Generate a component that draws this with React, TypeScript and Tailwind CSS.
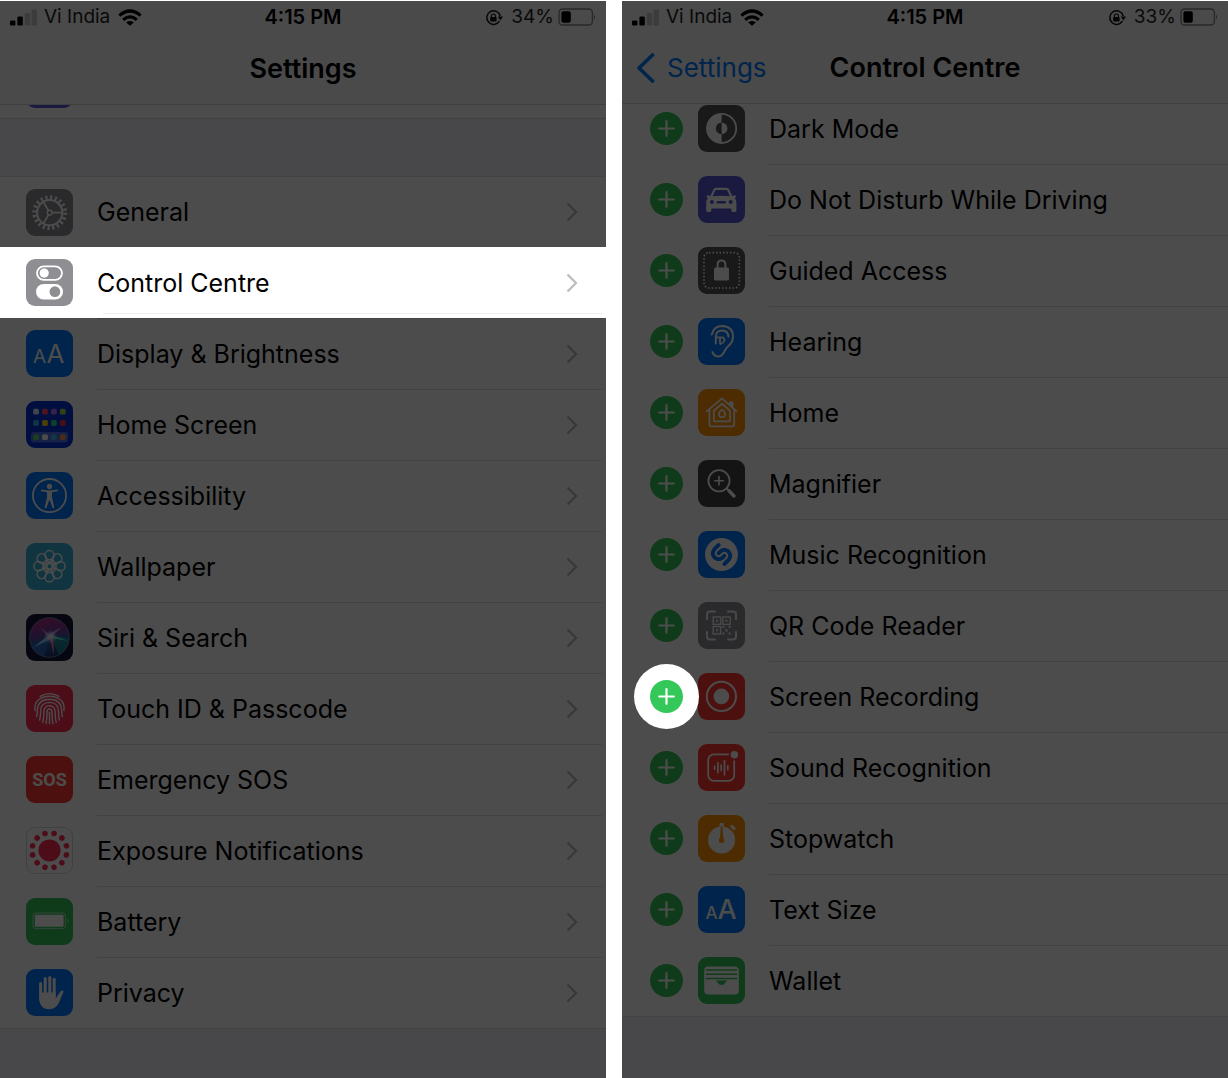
import type { ReactNode } from "react";
import { SiShazam } from "react-icons/si";

/* ---------- tile artwork, drawn on a 47 x 47 grid ---------- */

function Tile({ color, children }: { color: string; children: ReactNode }) {
  return (
    <svg viewBox="0 0 47 47" className="size-[47px] shrink-0" aria-hidden="true" fill="none">
      <rect width="47" height="47" rx="9" fill={color} />
      {children}
    </svg>
  );
}

const GeneralIcon = () => (
  <Tile color="#8e8e93">
    <circle cx="23.7" cy="23.7" r="12.6" stroke="#fff" strokeWidth="2" />
    <circle cx="23.7" cy="23.7" r="15.4" stroke="#fff" strokeWidth="4" strokeDasharray="2.1 2.738" />
    <circle cx="23.7" cy="23.7" r="2.4" stroke="#fff" strokeWidth="1.4" />
    <path d="M26.2 23.7H36M22.4 21.5L17.4 12.9M22.4 25.9L17.4 34.5" stroke="#fff" strokeWidth="1.8" />
  </Tile>
);

const ControlCentreIcon = () => (
  <Tile color="#8e8e93">
    <rect x="11" y="7.3" width="25" height="13.6" rx="6.8" stroke="#fff" strokeWidth="1.8" />
    <circle cx="18.2" cy="14.1" r="4.6" fill="#fff" />
    <rect x="10" y="25" width="27" height="15.4" rx="7.7" fill="#fff" />
    <circle cx="28.9" cy="32.7" r="5.4" fill="#8e8e93" />
  </Tile>
);

const DisplayIcon = () => (
  <Tile color="#007aff">
    <g fill="#fff" fontFamily="Inter, sans-serif" fontWeight="400">
      <text x="7" y="33" fontSize="19">A</text>
      <text x="20.6" y="33" fontSize="26">A</text>
    </g>
  </Tile>
);

const homeDots = [
  ["#d6e6ff", "#ff4562", "#b968f0", "#a9d83f"],
  ["#35aee6", "#ffcf10", "#35d38a", "#f0303a"],
  ["#58d05c", "#ffffff", "#45b4dc", "#f2984a"],
];
const HomeScreenIcon = () => (
  <Tile color="#0433d8">
    <rect x="5" y="31" width="37" height="10.4" rx="3" fill="#4f70e6" />
    {homeDots.map((line, r) =>
      line.map((c, i) => (
        <rect key={c} x={7.2 + i * 8.9} y={[7.8, 19.1, 33.2][r]} width="5.8" height="5.8" rx="1.6" fill={c} />
      )),
    )}
  </Tile>
);

const AccessibilityIcon = () => (
  <Tile color="#007aff">
    <circle cx="23.5" cy="23.6" r="16.6" stroke="#fff" strokeWidth="1.8" />
    <circle cx="23.5" cy="14.4" r="2.6" fill="#fff" />
    <path
      d="M15.4 17.4L21 18.2H26L31.6 17.4Q32.9 18.4 31.6 19.2L26 20.3V25.6L28.3 35.2Q27.6 36.7 26.5 35.8L23.8 28.2H23.2L20.5 35.8Q19.4 36.7 18.7 35.2L21 25.6V20.3L15.4 19.2Q14.1 18.4 15.4 17.4Z"
      fill="#fff"
    />
  </Tile>
);

const WallpaperIcon = () => (
  <Tile color="#38b0d6">
    <g stroke="#fff" strokeWidth="1.5">
      {[0, 45, 90, 135, 180, 225, 270, 315].map((a) => (
        <g key={a} transform={`rotate(${a} 23.5 23.2)`}>
          <circle cx="23.5" cy="12.2" r="4.6" />
          <path d="M23.5 20.2L20.4 15.6M23.5 20.2L26.6 15.6" />
        </g>
      ))}
      <circle cx="23.5" cy="23.2" r="2.8" />
    </g>
  </Tile>
);

const SiriIcon = () => (
  <Tile color="#15143a">
    <defs>
      <linearGradient id="siriOrb" x1="0.4" y1="0" x2="0.6" y2="1">
        <stop offset="0" stopColor="#b02a80" />
        <stop offset="0.4" stopColor="#6c3d9c" />
        <stop offset="0.6" stopColor="#2a5aa0" />
        <stop offset="1" stopColor="#173270" />
      </linearGradient>
      <radialGradient id="siriGlow">
        <stop offset="0" stopColor="#fff" />
        <stop offset="0.35" stopColor="#dfe8ff" stopOpacity="0.7" />
        <stop offset="1" stopColor="#9fc4ff" stopOpacity="0" />
      </radialGradient>
    </defs>
    <circle cx="23.5" cy="23.5" r="20" fill="url(#siriOrb)" />
    <path d="M24 22L5 33Q9 41 18 43Z" fill="#2f7fe0" opacity="0.5" />
    <path d="M24 22L43 24Q43 36 33 41Z" fill="#12a79a" opacity="0.6" />
    <path d="M24 20L8 33L26 24.5Z" fill="#8fd8ff" />
    <path d="M23 22L28 41L27 21Z" fill="#ff6e9e" />
    <path d="M24 20L42 27L25 24Z" fill="#4ff0cb" />
    <path d="M26 22L36 13L23 20Z" fill="#e6b6ff" opacity="0.8" />
    <path d="M25 22L14 13L22 23Z" fill="#e9a1e8" opacity="0.7" />
    <circle cx="24.5" cy="22.5" r="7" fill="url(#siriGlow)" />
    <circle cx="23.5" cy="23.5" r="19.8" stroke="#6b7698" strokeWidth="1" />
  </Tile>
);

const TouchIcon = () => (
  <Tile color="#ff2d55">
    <g stroke="#fff" strokeWidth="1.4" strokeLinecap="round">
      <path d="M14.2 11.4Q18.5 8.6 23.5 8.6T32.8 11.4" />
      <path d="M9 25.5Q8.3 18.5 12.3 15Q17 11.3 23.5 11.3T34.7 15Q38.7 18.5 38 25.5" />
      <path d="M10.6 31.5Q11.4 29 11.4 25Q11.8 14.6 23.5 14.3Q35.2 14.6 35.6 25Q35.6 29 36.4 31.5" />
      <path d="M13.6 35Q14.6 31 14.6 26Q14.8 17.6 23.5 17.4Q32.2 17.6 32.4 26Q32.4 31 33.4 35" />
      <path d="M16.8 37.4Q17.8 33 17.8 27Q18 20.8 23.5 20.6Q29 20.8 29.2 27Q29.2 33 30.2 37.4" />
      <path d="M20 38.6Q21 34 21 27.4Q21 24 23.5 23.9Q26 24 26 27.4Q26 34 27 38.6" />
      <path d="M23.5 27.2V38.8" />
    </g>
  </Tile>
);

const SosIcon = () => (
  <Tile color="#ff3b30">
    <text
      x="23.5"
      y="30"
      textAnchor="middle"
      fill="#fff"
      fontFamily="Roboto, sans-serif"
      fontWeight="700"
      fontSize="18"
    >
      SOS
    </text>
  </Tile>
);

const ExposureIcon = () => (
  <Tile color="#d8d8dc">
    <rect x="1" y="1" width="45" height="45" rx="8" fill="#fff" />
    <g fill="#ff2d55">
      <circle cx="23.5" cy="23.4" r="11" />
      {[15, 45, 75, 105, 135, 165, 195, 225, 255, 285, 315, 345].map((a) => (
        <circle key={a} cx="41" cy="23.4" r="2.8" transform={`rotate(${a} 23.5 23.4)`} />
      ))}
    </g>
  </Tile>
);

const BatteryTileIcon = () => (
  <Tile color="#34c759">
    <rect x="7" y="15" width="32.4" height="15.6" rx="2.8" stroke="#fff" strokeOpacity="0.6" strokeWidth="1" />
    <rect x="8.8" y="16.8" width="28.8" height="12" rx="1.4" fill="#fff" />
    <path d="M41.6 20.6Q43.8 22.8 41.6 25Z" fill="#fff" fillOpacity="0.7" />
  </Tile>
);

const PrivacyIcon = () => (
  <Tile color="#007aff">
    <path
      d="M14.6 14.4V27M19.2 9.4V26M23.8 8.4V26M28.2 10.2V27"
      stroke="#fff"
      strokeWidth="3"
      strokeLinecap="round"
    />
    <path
      d="M13.1 23.5H29.7V29.5L34.4 22.6Q36.3 20.7 37.6 22.4L33.2 33Q30.2 40.3 23 40.3Q14.6 40.3 13.1 31Z"
      fill="#fff"
    />
  </Tile>
);

const DarkModeIcon = () => (
  <Tile color="#545456">
    <circle cx="23.6" cy="23.4" r="14.6" stroke="#fff" strokeWidth="1.8" />
    <path d="M23.6 8.6A14.8 14.8 0 0 0 23.6 38.2V29.2A5.8 5.8 0 0 1 23.6 17.6Z" fill="#fff" />
    <path d="M23.6 17.6A5.8 5.8 0 0 1 23.6 29.2Z" fill="#fff" />
  </Tile>
);

const CarIcon = () => (
  <Tile color="#5856d6">
    <path
      d="M12.2 20.6L15.1 14Q16 11.8 18.3 11.7H28.3Q30.6 11.8 31.5 14L34.4 20.6L35 19.6H37.6Q38.6 20.6 37.4 21.8L36.6 22.2Q38.4 23.8 38.4 26.2V34.4Q38.3 36 36.7 36H35Q33.4 36 33.3 34.4V32.6H13.3V34.4Q13.2 36 11.6 36H9.9Q8.3 36 8.2 34.4V26.2Q8.2 23.8 10 22.2L9.2 21.8Q8 20.6 9 19.6H11.6Z"
      fill="#fff"
    />
    <path d="M14.6 20.3L17 14.9Q17.5 13.9 18.6 13.9H28Q29.1 13.9 29.6 14.9L32 20.3Q23.3 19.3 14.6 20.3Z" fill="#5856d6" />
    <circle cx="13.9" cy="25.9" r="2" fill="#5856d6" />
    <circle cx="32.7" cy="25.9" r="2" fill="#5856d6" />
    <rect x="18.6" y="25" width="9.4" height="2.4" rx="1.2" fill="#5856d6" />
  </Tile>
);

const GuidedIcon = () => (
  <Tile color="#545456">
    <rect x="6" y="5.6" width="35.4" height="35.4" rx="5" stroke="#fff" strokeWidth="1.6" strokeDasharray="1.5 2" />
    <rect x="16" y="20.4" width="15" height="13" rx="1.6" fill="#fff" />
    <path d="M19.6 21V17.4Q19.7 13.5 23.5 13.5T27.4 17.4V21" stroke="#fff" strokeWidth="2" />
  </Tile>
);

const HearingIcon = () => (
  <Tile color="#007aff">
    <g stroke="#fff" strokeWidth="2" strokeLinecap="round">
      <path d="M13.8 16.6Q15.6 8 24.4 8Q35 8.6 35 18.6Q34.8 24.4 30.4 28Q27.6 30.4 26 34.2Q23.8 39 19.2 38.4Q15.6 37.8 14.4 34" />
      <path d="M17.8 25.4V18.4Q18.2 12.8 24 12.6Q30.4 13 30.4 18.8" />
      <path d="M22 25.6V19.4M18.2 19.4H24.6Q27 20.6 26.2 23Q25.4 25 22.6 26" strokeWidth="1.8" />
    </g>
  </Tile>
);

const HouseIcon = () => (
  <Tile color="#ff9500">
    <g stroke="#fff" strokeWidth="1.8" strokeLinejoin="round" strokeLinecap="round">
      <path d="M8.6 22.4L24 9.4L38.6 22.4" />
      <path d="M31.8 16V13.4H34.6V18.6" fill="#fff" />
      <path d="M11.4 20.4V35.6Q11.4 37.4 13.2 37.4H34.4Q36.2 37.4 36.2 35.6V20.6" />
      <path d="M15.8 21.8L24 14.8L32 21.8V31.4Q32 32.4 31 32.4H16.8Q15.8 32.4 15.8 31.4Z" />
      <path d="M24 20.6Q27.4 23 27.2 25.6Q26.8 28.4 24 28.4T20.8 25.6Q20.6 23 24 20.6Z" strokeWidth="1.6" />
    </g>
  </Tile>
);

const MagnifierIcon = () => (
  <Tile color="#434348">
    <g stroke="#fff" strokeLinecap="round">
      <circle cx="21" cy="20.8" r="10.6" strokeWidth="1.8" />
      <path d="M21 16.6V25M16.8 20.8H25.2" strokeWidth="1.6" />
      <path d="M28.6 28.4L31 30.8" strokeWidth="1.8" />
      <path d="M31 30.8L36 36" strokeWidth="3.4" />
    </g>
  </Tile>
);

const MusicIcon = () => (
  <Tile color="#007aff">
    <SiShazam x={7} y={7} size={33} color="#fff" />
  </Tile>
);

const QrIcon = () => (
  <Tile color="#8e8e93">
    <g stroke="#fff" strokeWidth="2" opacity="0.9">
      <path d="M9 17V12.4Q9 9.4 12 9.4H17M30 9.4H35Q38 9.4 38 12.4V17M38 30V34.6Q38 37.6 35 37.6H30M17 37.6H12Q9 37.6 9 34.6V30" strokeLinecap="round" />
      <g strokeWidth="1.4">
        <rect x="15.2" y="15" width="7.4" height="7.4" />
        <rect x="24.8" y="15" width="7.4" height="7.4" />
        <rect x="15.2" y="24.6" width="7.4" height="7.4" />
      </g>
    </g>
    <path
      d="M17.9 17.7h2v2h-2zM27.5 17.7h2v2h-2zM17.9 27.3h2v2h-2zM24.4 24h2v2h-2zM30.6 24h2v2h-2zM27.4 27.2h2.2v2.2h-2.2zM24.4 30.6h2v2h-2zM30.6 30.6h2v2h-2z"
      fill="#fff"
      opacity="0.9"
    />
  </Tile>
);

const RecordIcon = () => (
  <Tile color="#ff3b30">
    <circle cx="23.4" cy="23.4" r="14.6" stroke="#fff" strokeWidth="2" />
    <circle cx="23.4" cy="23.4" r="7.8" fill="#fff" />
  </Tile>
);

const SoundIcon = () => (
  <Tile color="#ff3b30">
    <rect x="10.2" y="10.4" width="26" height="26.4" rx="5.6" stroke="#fff" strokeWidth="1.7" />
    <circle cx="36.4" cy="10.8" r="5.6" fill="#ff3b30" />
    <circle cx="36.4" cy="10.8" r="3.7" fill="#fff" />
    <path
      d="M16.6 22.2V25.2M19.9 18.8V28.6M23.2 21V26.4M26.5 16.6V30.8M29.8 21.8V25.6"
      stroke="#fff"
      strokeWidth="1.7"
      strokeLinecap="round"
    />
  </Tile>
);

const StopwatchIcon = () => (
  <Tile color="#ff9500">
    <circle cx="23.6" cy="25" r="13.6" fill="#fff" />
    <rect x="21.4" y="8" width="4.4" height="5" rx="1" fill="#fff" />
    <path d="M33.8 11.4L36.2 13.6" stroke="#fff" strokeWidth="2.8" strokeLinecap="round" />
    <path d="M22.9 11H24.3L25.3 24H21.9Z" fill="#ff9500" />
    <circle cx="23.6" cy="25.2" r="2.6" fill="#ff9500" />
  </Tile>
);

const TextSizeIcon = () => (
  <Tile color="#007aff">
    <g fill="#fff" fontFamily="Inter, sans-serif" fontWeight="500">
      <text x="7.6" y="33.4" fontSize="17">A</text>
      <text x="19.4" y="33.4" fontSize="27">A</text>
    </g>
  </Tile>
);

const WalletIcon = () => (
  <Tile color="#34c759">
    <rect x="6.2" y="9.6" width="34.6" height="28" rx="4" fill="#fff" />
    <path
      d="M8.4 13H38.6M8.4 17.2H38.6M8.4 21.4H38.6"
      stroke="#34c759"
      strokeWidth="1.5"
      strokeLinecap="round"
    />
    <path d="M17.4 23.4H29.6Q28.4 23.8 27.4 25.4Q26 28 23.5 28T19.6 25.4Q18.6 23.8 17.4 23.4Z" fill="#34c759" />
  </Tile>
);

/* ---------- status bar ---------- */

function StatusBar({ charge }: { charge: string }) {
  return (
    <div className="grid h-8 grid-cols-[1fr_auto_1fr] items-center px-2.5 text-[19px] leading-6">
      <div className="flex items-center">
        <svg viewBox="0 0 27 17" className="mr-[7px] h-[17px] w-[27px]" aria-hidden="true">
          <rect x="0" y="11.5" width="5.4" height="5" rx="1.2" />
          <rect x="7.4" y="7.5" width="5.4" height="9" rx="1.2" />
          <rect x="14.8" y="4" width="5.4" height="12.5" rx="1.2" fill="#c9c9c9" />
          <rect x="21.6" y="0.5" width="5.4" height="16" rx="1.2" fill="#c9c9c9" />
        </svg>
        <span className="text-[#222222]">Vi India</span>
        <svg viewBox="0 0 24 17" className="ml-2 h-[17px] w-6" aria-hidden="true" fill="none" stroke="#000" strokeWidth="3.2">
          <path d="M1.4 6.6Q12 -2.6 22.6 6.6" />
          <path d="M5.2 10.9Q12 5 18.8 10.9" />
          <path d="M12 16.8L8.2 13.4Q12 10.6 15.8 13.4Z" fill="#000" stroke="none" />
        </svg>
      </div>
      <span className="text-[20px] font-semibold">4:15 PM</span>
      <div className="flex items-center justify-end">
        <svg viewBox="0 0 18 17" className="mr-2 h-[17px] w-[18px]" aria-hidden="true" fill="none" stroke="#111">
          <path d="M14.4 12.2A6.8 6.8 0 1 1 15.2 7" strokeWidth="1.5" />
          <path d="M12.8 7.6H18L15.4 11.4Z" fill="#111" stroke="none" />
          <rect x="5.2" y="8" width="6.4" height="4.6" rx="0.8" fill="#111" stroke="none" />
          <path d="M6.4 8.2V6.8Q6.6 5 8.4 5T10.4 6.8V8.2" strokeWidth="1.2" />
        </svg>
        <span className="text-[#222222]">{charge}</span>
        <svg viewBox="0 0 38 18" className="ml-1 h-[18px] w-[38px]" aria-hidden="true" fill="none">
          <rect x="1" y="1" width="33.4" height="16" rx="3.6" stroke="#8a8a8a" strokeWidth="1.4" />
          <rect x="3.4" y="3.2" width="9.4" height="11.6" rx="2" fill="#000" />
          <path d="M36 6.4Q38.2 9 36 11.6Z" fill="#8a8a8a" />
        </svg>
      </div>
    </div>
  );
}

/* Dark veil over a whole phone; lit parts sit above it with z-20. */
const Veil = () => <div className="pointer-events-none absolute inset-0 z-10 bg-black/70" />;

/* ---------- settings phone ---------- */

const settings: { label: string; icon: ReactNode; lit?: boolean }[] = [
  { label: "General", icon: <GeneralIcon /> },
  { label: "Control Centre", icon: <ControlCentreIcon />, lit: true },
  { label: "Display & Brightness", icon: <DisplayIcon /> },
  { label: "Home Screen", icon: <HomeScreenIcon /> },
  { label: "Accessibility", icon: <AccessibilityIcon /> },
  { label: "Wallpaper", icon: <WallpaperIcon /> },
  { label: "Siri & Search", icon: <SiriIcon /> },
  { label: "Touch ID & Passcode", icon: <TouchIcon /> },
  { label: "Emergency SOS", icon: <SosIcon /> },
  { label: "Exposure Notifications", icon: <ExposureIcon /> },
  { label: "Battery", icon: <BatteryTileIcon /> },
  { label: "Privacy", icon: <PrivacyIcon /> },
];

function SettingsPhone() {
  return (
    <section className="relative flex flex-col overflow-hidden bg-[#f2f2f7]">
      <header className="border-b border-[#d8d8da] bg-[#f8f8f8]">
        <StatusBar charge="34%" />
        <h1 className="flex h-[71px] items-center justify-center text-[27px] font-semibold">Settings</h1>
      </header>
      <div className="h-3.5 border-b border-[#dcdcde] bg-white pl-[26px]">
        <div className="flex h-[3px] items-end overflow-hidden">
          <div className="h-[47px] w-[47px] shrink-0 rounded-[9px] bg-[#5856d6]" />
        </div>
      </div>
      <ul className="mt-[57px] border-b border-[#dcdcde] bg-white">
        {settings.map(({ label, icon, lit }, i) => (
          <li key={label} className={lit ? "relative z-20 bg-white" : i === 0 ? "border-t border-[#dcdcde]" : ""}>
            <button
              type="button"
              className={`flex w-full items-center pl-[26px] text-left ${i === 0 ? "h-[70px]" : "h-[71px]"}`}
            >
              {icon}
              <span
                className={`ml-6 flex flex-1 items-center justify-between self-stretch pr-6 ${
                  i === 0 ? "" : lit ? "border-t border-transparent" : "border-t border-[#dcdcde]"
                } mr-1`}
              >
                <span>{label}</span>
                <svg viewBox="0 0 12 20" className="h-5 w-3" aria-hidden="true" fill="none">
                  <path d="M1.5 1.5L10 10L1.5 18.5" stroke="#bcbcc0" strokeWidth="2.2" />
                </svg>
              </span>
            </button>
            {lit && <span className="absolute right-1 bottom-1 left-[103px] h-px bg-[#ededee]" />}
          </li>
        ))}
      </ul>
      <Veil />
    </section>
  );
}

/* ---------- control centre phone ---------- */

const controls: { label: string; icon: ReactNode; lit?: boolean }[] = [
  { label: "Dark Mode", icon: <DarkModeIcon /> },
  { label: "Do Not Disturb While Driving", icon: <CarIcon /> },
  { label: "Guided Access", icon: <GuidedIcon /> },
  { label: "Hearing", icon: <HearingIcon /> },
  { label: "Home", icon: <HouseIcon /> },
  { label: "Magnifier", icon: <MagnifierIcon /> },
  { label: "Music Recognition", icon: <MusicIcon /> },
  { label: "QR Code Reader", icon: <QrIcon /> },
  { label: "Screen Recording", icon: <RecordIcon />, lit: true },
  { label: "Sound Recognition", icon: <SoundIcon /> },
  { label: "Stopwatch", icon: <StopwatchIcon /> },
  { label: "Text Size", icon: <TextSizeIcon /> },
  { label: "Wallet", icon: <WalletIcon /> },
];

function AddButton({ label, lit }: { label: string; lit?: boolean }) {
  return (
    <button
      type="button"
      aria-label={`Add ${label}`}
      className={`shrink-0 rounded-full ${lit ? "relative z-20 bg-white ring-16 ring-white" : ""}`}
    >
      <svg viewBox="0 0 33 33" className="size-[33px]" aria-hidden="true">
        <circle cx="16.5" cy="16.5" r="16.5" fill="#34c759" />
        <path d="M16.5 9.2V23.8M9.2 16.5H23.8" stroke="#fff" strokeWidth="2.2" strokeLinecap="round" />
      </svg>
    </button>
  );
}

function ControlCentrePhone() {
  return (
    <section className="relative flex flex-col overflow-hidden bg-[#f2f2f7]">
      <header className="relative z-[1] border-b border-[#d8d8da] bg-[#f8f8f8]">
        <StatusBar charge="33%" />
        <div className="grid h-[70px] grid-cols-[1fr_auto_1fr] items-center px-3.5">
          <a href="#settings" className="flex items-center gap-3 text-[26px] text-[#007aff]">
            <svg viewBox="0 0 19 30" className="h-[30px] w-[19px]" aria-hidden="true" fill="none">
              <path d="M16.5 2L3 15L16.5 28" stroke="#007aff" strokeWidth="3.6" strokeLinecap="round" strokeLinejoin="round" />
            </svg>
            Settings
          </a>
          <h2 className="text-[27px] font-semibold">Control Centre</h2>
        </div>
      </header>
      <ul className="-mt-[11px] border-b border-[#dcdcde] bg-white">
        {controls.map(({ label, icon, lit }) => (
          <li key={label} className="flex h-[71px] items-center gap-[15px] pl-7">
            <AddButton label={label} lit={lit} />
            {icon}
            <span className="ml-[9px] flex flex-1 items-center self-stretch border-t border-[#dcdcde]">{label}</span>
          </li>
        ))}
      </ul>
      <Veil />
    </section>
  );
}

export default function App() {
  return (
    <main className="grid min-h-screen grid-cols-2 gap-4 bg-white pt-px font-['Inter','Liberation_Sans',sans-serif] text-[25px] leading-8 text-black">
      <SettingsPhone />
      <ControlCentrePhone />
    </main>
  );
}
